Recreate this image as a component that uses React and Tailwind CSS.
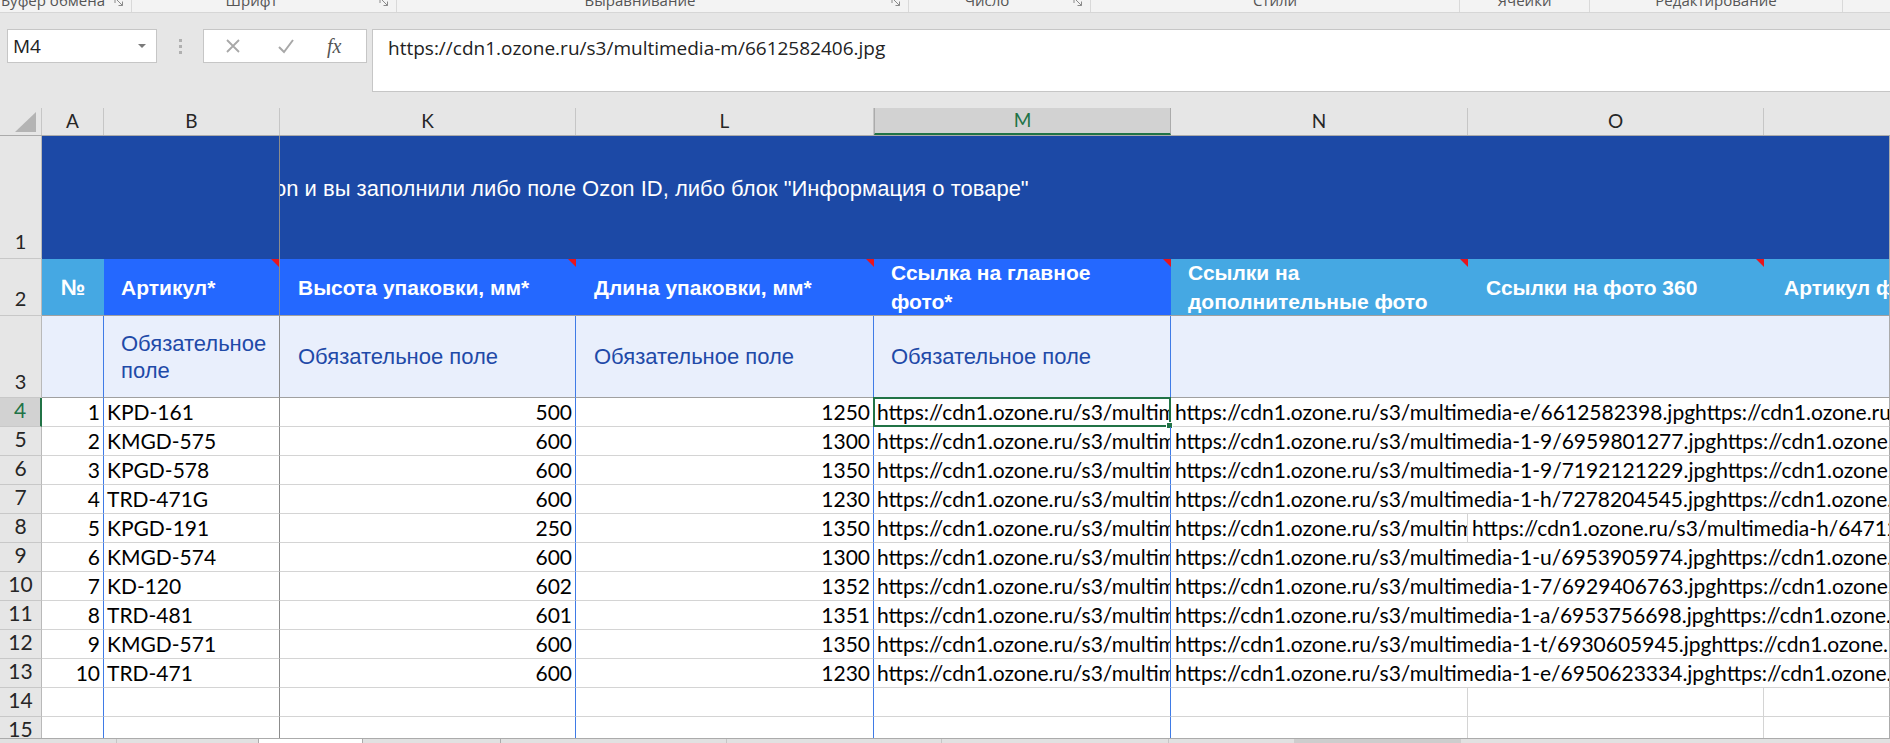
import React from 'react';

// --- ribbon group captions (top strip, cut off) ---
const groups = [
  { label: 'Буфер обмена', w: 'w-[132px]', launcher: true },
  { label: 'Шрифт', w: 'w-[265px]', launcher: true },
  { label: 'Выравнивание', w: 'w-[512px]', launcher: true },
  { label: 'Число', w: 'w-[182px]', launcher: true },
  { label: 'Стили', w: 'w-[369px]' },
  { label: 'Ячейки', w: 'w-[130px]' },
  { label: 'Редактирование', w: 'w-[253px]' },
];

const rows = [
  [1, 'KPD-161', 500, 1250, 'https://cdn1.ozone.ru/s3/multimedia-m/6612582406.jpg', 'https://cdn1.ozone.ru/s3/multimedia-e/6612582398.jpghttps://cdn1.ozone.ru/s3/multimedia-d/6612582397.jpg'],
  [2, 'KMGD-575', 600, 1300, 'https://cdn1.ozone.ru/s3/multimedia-1-k/6959801288.jpg', 'https://cdn1.ozone.ru/s3/multimedia-1-9/6959801277.jpghttps://cdn1.ozone.ru/s3/multimedia-1-a/6959801278.jpg'],
  [3, 'KPGD-578', 600, 1350, 'https://cdn1.ozone.ru/s3/multimedia-1-b/7192121231.jpg', 'https://cdn1.ozone.ru/s3/multimedia-1-9/7192121229.jpghttps://cdn1.ozone.ru/s3/multimedia-1-a/7192121230.jpg'],
  [4, 'TRD-471G', 600, 1230, 'https://cdn1.ozone.ru/s3/multimedia-1-j/7278204547.jpg', 'https://cdn1.ozone.ru/s3/multimedia-1-h/7278204545.jpghttps://cdn1.ozone.ru/s3/multimedia-1-i/7278204546.jpg'],
  [5, 'KPGD-191', 250, 1350, 'https://cdn1.ozone.ru/s3/multimedia-h/6471234567.jpg', 'https://cdn1.ozone.ru/s3/multimedia-g/6471234566.jpg', 'https://cdn1.ozone.ru/s3/multimedia-h/6471234568.jpg'],
  [6, 'KMGD-574', 600, 1300, 'https://cdn1.ozone.ru/s3/multimedia-1-w/6953905976.jpg', 'https://cdn1.ozone.ru/s3/multimedia-1-u/6953905974.jpghttps://cdn1.ozone.ru/s3/multimedia-1-v/6953905975.jpg'],
  [7, 'KD-120', 602, 1352, 'https://cdn1.ozone.ru/s3/multimedia-1-9/6929406765.jpg', 'https://cdn1.ozone.ru/s3/multimedia-1-7/6929406763.jpghttps://cdn1.ozone.ru/s3/multimedia-1-8/6929406764.jpg'],
  [8, 'TRD-481', 601, 1351, 'https://cdn1.ozone.ru/s3/multimedia-1-c/6953756700.jpg', 'https://cdn1.ozone.ru/s3/multimedia-1-a/6953756698.jpghttps://cdn1.ozone.ru/s3/multimedia-1-b/6953756699.jpg'],
  [9, 'KMGD-571', 600, 1350, 'https://cdn1.ozone.ru/s3/multimedia-1-v/6930605947.jpg', 'https://cdn1.ozone.ru/s3/multimedia-1-t/6930605945.jpghttps://cdn1.ozone.ru/s3/multimedia-1-u/6930605946.jpg'],
  [10, 'TRD-471', 600, 1230, 'https://cdn1.ozone.ru/s3/multimedia-1-g/6950623336.jpg', 'https://cdn1.ozone.ru/s3/multimedia-1-e/6950623334.jpghttps://cdn1.ozone.ru/s3/multimedia-1-f/6950623335.jpg'],
];

const Launcher = () => (
  <svg width="10" height="10" viewBox="0 0 10 10" className="ml-[8px] mr-[7px] shrink-0 -mt-[3px]">
    <path d="M1 6V1H6" fill="none" stroke="#8a8a8a" strokeWidth="1" />
    <path d="M3 3L8.5 8.5M8.5 4.5V8.5H4.5" fill="none" stroke="#8a8a8a" strokeWidth="1" />
  </svg>
);

const RedMark = () => (
  <svg width="8" height="8" viewBox="0 0 8 8" className="absolute top-0 right-0">
    <polygon points="0,0 8,0 8,8" fill="#e8141c" />
  </svg>
);

const RowHead = ({ n, h, sel }) => (
  <div
    className={`w-[42px] ${h} shrink-0 flex items-end justify-center pb-[2px] border-b border-[#c8c8c8] ${
      sel ? 'bg-[#d2d2d2] text-[#217346] border-r-2 border-r-[#217346]' : 'bg-[#e6e6e6] text-[#262626] border-r border-r-[#b9b9b9]'
    }`}
  >
    {n}
  </div>
);

export default function App() {
  return (
    <div className="w-[1890px] h-[743px] overflow-hidden bg-[#e6e6e6] flex flex-col font-['Lato',sans-serif]">
      {/* ribbon captions */}
      <div className="h-[13px] shrink-0 flex bg-[#f3f3f3] border-b border-[#d6d6d6] overflow-hidden font-['Open_Sans',sans-serif] text-[15px] text-[#555]">
        {groups.map((g) => (
          <div key={g.label} className={`${g.w} shrink-0 flex border-r border-[#d9d9d9]`}>
            <div className="flex-1 text-center leading-[16px] -mt-[8px] whitespace-nowrap">{g.label}</div>
            {g.launcher && <Launcher />}
          </div>
        ))}
      </div>

      {/* formula bar */}
      <div className="h-[95px] shrink-0 flex items-start pt-[16px] font-['Open_Sans',sans-serif]">
        <div className="ml-[7px] w-[150px] h-[34px] bg-white border border-[#c6c6c6] flex items-center pl-[5px] pr-[10px] text-[19px] text-[#222]">
          <span className="flex-1">M4</span>
          <svg width="8" height="5" viewBox="0 0 8 5"><polygon points="0,0 8,0 4,4" fill="#7a7a7a" /></svg>
        </div>
        <div className="w-[46px] h-[34px] flex flex-col items-center justify-center gap-[3px]">
          <span className="w-[3px] h-[3px] bg-[#b0b0b0]" />
          <span className="w-[3px] h-[3px] bg-[#b0b0b0]" />
          <span className="w-[3px] h-[3px] bg-[#b0b0b0]" />
        </div>
        <div className="w-[164px] h-[34px] bg-white border border-[#c6c6c6] flex items-center">
          <svg width="16" height="16" viewBox="0 0 16 16" className="ml-[21px]">
            <path d="M2 2L14 14M14 2L2 14" stroke="#a8a8a8" strokeWidth="1.8" />
          </svg>
          <svg width="18" height="16" viewBox="0 0 18 16" className="ml-[36px]">
            <path d="M2 9L7 14L16 2" fill="none" stroke="#a8a8a8" strokeWidth="2" />
          </svg>
          <span className="ml-[32px] font-['Liberation_Serif',serif] italic text-[20px] text-[#555] leading-none">fx</span>
        </div>
        <div className="ml-[5px] flex-1 h-[63px] bg-white border-y border-l border-[#c6c6c6] pl-[15px] pt-[4px] text-[19px] text-[#222]">
          https://cdn1.ozone.ru/s3/multimedia-m/6612582406.jpg
        </div>
      </div>

      {/* column headers */}
      <div className="h-[28px] shrink-0 flex text-[19px] text-[#262626] border-b border-[#ababab]">
        <div className="w-[42px] shrink-0 border-r border-[#c6c6c6] flex items-end justify-end pr-[4px] pb-[3px]">
          <svg width="22" height="20" viewBox="0 0 22 20"><polygon points="21,0 21,20 0,20" fill="#b4b4b4" /></svg>
        </div>
        <div className="w-[62px] shrink-0 border-r border-[#c6c6c6] flex items-center justify-center">A</div>
        <div className="w-[176px] shrink-0 border-r border-[#c6c6c6] flex items-center justify-center">B</div>
        <div className="w-[296px] shrink-0 border-r border-[#c6c6c6] flex items-center justify-center">K</div>
        <div className="w-[298px] shrink-0 border-r border-[#c6c6c6] flex items-center justify-center">L</div>
        <div className="w-[297px] shrink-0 bg-[#d2d2d2] border-x border-[#ababab] border-b-2 border-b-[#217346] text-[#217346] flex items-center justify-center">M</div>
        <div className="w-[297px] shrink-0 border-r border-[#c6c6c6] flex items-center justify-center">N</div>
        <div className="w-[296px] shrink-0 border-r border-[#c6c6c6] flex items-center justify-center">O</div>
        <div className="w-[126px] shrink-0" />
      </div>

      {/* sheet */}
      <div className="h-[602px] shrink-0 overflow-hidden bg-white text-[21px] text-black">
        {/* row 1 */}
        <div className="flex h-[123px] text-[20px]">
          <RowHead n={1} h="h-[123px]" />
          <div className="w-[238px] shrink-0 bg-[#1c49a6] border-r border-[#8c8c8c]" />
          <div className="w-[1610px] shrink-0 bg-[#1c49a6] overflow-hidden flex items-center pb-[18px] border-r border-[#ababab]">
            <span className="-ml-[6px] whitespace-nowrap font-['Liberation_Sans',Arial,sans-serif] text-[22px] text-white">
              on и вы заполнили либо поле Ozon ID, либо блок "Информация о товаре"
            </span>
          </div>
        </div>

        {/* row 2 */}
        <div className="flex h-[57px] font-['Liberation_Sans',Arial,sans-serif] font-bold text-[21px] text-white leading-[29px]">
          <div className="w-[42px] h-[57px] shrink-0 flex items-end justify-center pb-[2px] border-b border-[#c8c8c8] bg-[#e6e6e6] text-[#262626] border-r border-r-[#b9b9b9] font-['Lato',sans-serif] font-normal text-[20px]">2</div>
          <div className="w-[62px] shrink-0 bg-[#45a8e3] border-b border-[#a0a0a0] flex items-center justify-center text-[22px]">№</div>
          <div className="relative w-[176px] shrink-0 bg-[#2468ff] border-b border-[#a0a0a0] border-r border-r-[#8c8c8c] flex items-center pl-[17px]">
            Артикул*<RedMark />
          </div>
          <div className="relative w-[296px] shrink-0 bg-[#2468ff] border-b border-[#a0a0a0] flex items-center pl-[18px]">
            Высота упаковки, мм*<RedMark />
          </div>
          <div className="relative w-[298px] shrink-0 bg-[#2468ff] border-b border-[#a0a0a0] flex items-center pl-[18px]">
            Длина упаковки, мм*<RedMark />
          </div>
          <div className="relative w-[297px] shrink-0 bg-[#2468ff] border-b border-[#a0a0a0] flex items-center pl-[17px] pr-[20px]">
            Ссылка на главное фото*<RedMark />
          </div>
          <div className="relative w-[297px] shrink-0 bg-[#45a8e3] border-b border-[#a0a0a0] flex items-center pl-[17px] pr-[20px]">
            Ссылки на дополнительные фото<RedMark />
          </div>
          <div className="relative w-[296px] shrink-0 bg-[#45a8e3] border-b border-[#a0a0a0] flex items-center pl-[18px]">
            Ссылки на фото 360<RedMark />
          </div>
          <div className="w-[126px] shrink-0 bg-[#45a8e3] border-b border-[#a0a0a0] border-r border-r-[#ababab] flex items-center pl-[20px] overflow-hidden whitespace-nowrap">
            Артикул фото
          </div>
        </div>

        {/* row 3 */}
        <div className="flex h-[82px] font-['Liberation_Sans',Arial,sans-serif] text-[22px] text-[#1f4aa8] leading-[27px] bg-[#e9effc]">
          <div className="w-[42px] h-[82px] shrink-0 flex items-end justify-center pb-[2px] border-b border-[#c8c8c8] bg-[#e6e6e6] text-[#262626] border-r border-r-[#b9b9b9] font-['Lato',sans-serif] text-[20px]">3</div>
          <div className="w-[62px] shrink-0 border-b border-[#a0a0a0] border-r border-r-[#3f7be6]" />
          <div className="w-[176px] shrink-0 border-b border-[#a0a0a0] border-r border-r-[#8c8c8c] flex items-center pl-[17px] pr-[4px]">
            Обязательное поле
          </div>
          <div className="w-[296px] shrink-0 border-b border-[#a0a0a0] border-r border-r-[#3f7be6] flex items-center pl-[18px]">
            Обязательное поле
          </div>
          <div className="w-[298px] shrink-0 border-b border-[#a0a0a0] border-r border-r-[#3f7be6] flex items-center pl-[18px]">
            Обязательное поле
          </div>
          <div className="w-[297px] shrink-0 border-b border-[#a0a0a0] border-r border-r-[#3f7be6] flex items-center pl-[17px]">
            Обязательное поле
          </div>
          <div className="w-[719px] shrink-0 border-b border-[#a0a0a0] border-r border-r-[#ababab]" />
        </div>

        {/* data rows */}
        {rows.map((r, i) => (
          <div key={r[0]} className="flex h-[29px] leading-[28px]">
            <RowHead n={i + 4} h="h-[29px]" sel={i === 0} />
            <div className="w-[62px] shrink-0 border-b border-[#d4d4d4] border-r border-r-[#3f7be6] text-right pr-[3px]">{r[0]}</div>
            <div className="w-[176px] shrink-0 border-b border-[#d4d4d4] border-r border-r-[#8c8c8c] pl-[3px]">{r[1]}</div>
            <div className="w-[296px] shrink-0 border-b border-[#d4d4d4] border-r border-r-[#3f7be6] text-right pr-[3px]">{r[2]}</div>
            <div className="w-[298px] shrink-0 border-b border-[#d4d4d4] border-r border-r-[#3f7be6] text-right pr-[3px]">{r[3]}</div>
            <div className="relative w-[297px] shrink-0 border-b border-[#d4d4d4] border-r border-r-[#3f7be6]">
              <div className="overflow-hidden whitespace-nowrap pl-[3px]">{r[4]}</div>
              {i === 0 && (
                <div className="absolute -left-[1px] -top-[1px] -right-[1px] -bottom-[1px] border-2 border-[#217346]">
                  <div className="absolute -right-[4px] -bottom-[4px] w-[7px] h-[7px] bg-[#217346] border border-white" />
                </div>
              )}
            </div>
            {r[6] ? (
              <>
                <div className="w-[297px] shrink-0 border-b border-[#d4d4d4] border-r overflow-hidden whitespace-nowrap pl-[4px]">{r[5]}</div>
                <div className="w-[422px] shrink-0 border-b border-[#d4d4d4] border-r border-r-[#ababab] overflow-hidden whitespace-nowrap pl-[4px]">{r[6]}</div>
              </>
            ) : (
              <div className="w-[719px] shrink-0 border-b border-[#d4d4d4] border-r border-r-[#ababab] overflow-hidden whitespace-nowrap pl-[4px]">{r[5]}</div>
            )}
          </div>
        ))}

        {/* empty rows */}
        {[14, 15].map((n) => (
          <div key={n} className="flex h-[29px] leading-[28px]">
            <RowHead n={n} h="h-[29px]" />
            <div className="w-[62px] shrink-0 border-b border-[#d4d4d4] border-r border-r-[#3f7be6]" />
            <div className="w-[176px] shrink-0 border-b border-[#d4d4d4] border-r border-r-[#8c8c8c]" />
            <div className="w-[296px] shrink-0 border-b border-[#d4d4d4] border-r border-r-[#3f7be6]" />
            <div className="w-[298px] shrink-0 border-b border-[#d4d4d4] border-r border-r-[#3f7be6]" />
            <div className="w-[297px] shrink-0 border-b border-[#d4d4d4] border-r border-r-[#3f7be6]" />
            <div className="w-[297px] shrink-0 border-b border-[#d4d4d4] border-r" />
            <div className="w-[296px] shrink-0 border-b border-[#d4d4d4] border-r" />
            <div className="w-[126px] shrink-0 border-b border-[#d4d4d4] border-r border-r-[#ababab]" />
          </div>
        ))}
      </div>

      {/* sheet tabs / scrollbar strip */}
      <div className="h-[5px] shrink-0 flex border-t border-[#ababab]">
        <div className="w-[117px] bg-[#e1e1e1] border-r border-[#c6c6c6]" />
        <div className="w-[142px] bg-[#e1e1e1] border-r border-[#ababab]" />
        <div className="w-[103px] bg-white" />
        <div className="w-[139px] bg-[#e1e1e1] border-x border-[#ababab]" />
        <div className="w-[226px] bg-[#e1e1e1] border-r border-[#c6c6c6]" />
        <div className="w-[215px] bg-[#e1e1e1] border-r border-[#c6c6c6]" />
        <div className="w-[227px] bg-[#e1e1e1] border-r border-[#c6c6c6]" />
        <div className="w-[125px] bg-[#e1e1e1]" />
        <div className="w-[167px] bg-[#cdcdcd]" />
        <div className="flex-1 bg-[#e1e1e1]" />
      </div>
    </div>
  );
}
